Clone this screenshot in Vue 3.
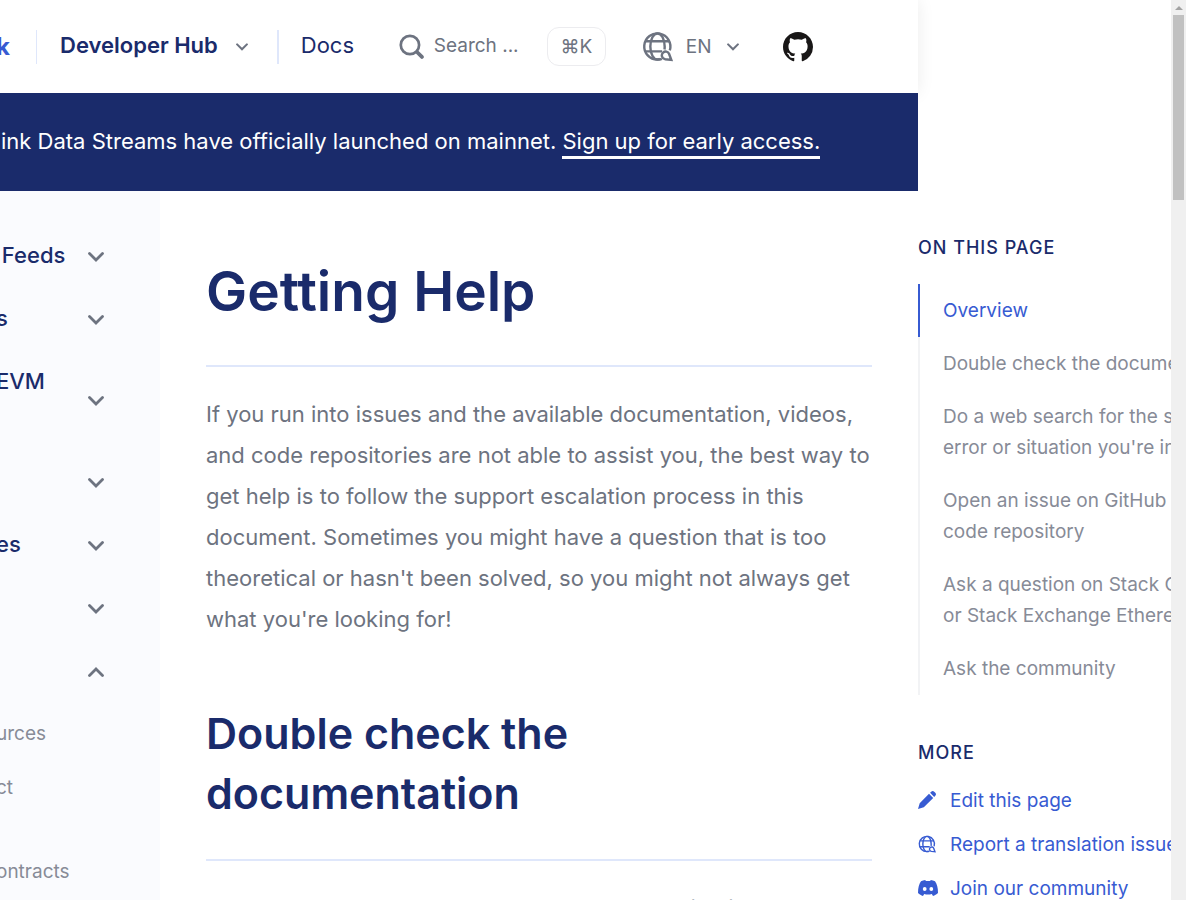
<script setup>
const navItems = [
  { label: '\u00a0Feeds', size: 'single' },
  { label: 's', size: 'single' },
  { label: 'EVM', size: 'double' },
  { label: '', size: 'single' },
  { label: 'es', size: 'single' },
  { label: '', size: 'single' },
  { label: '', size: 'single', open: true },
]
const toc = [
  ['Overview'],
  ['Double check the documentation'],
  ['Do a web search for the specific', "error or situation you're in"],
  ['Open an issue on GitHub', 'code repository'],
  ['Ask a question on Stack Overflow', 'or Stack Exchange Ethereum'],
  ['Ask the community'],
]
</script>

<template>
  <div class="window">
    <svg class="defs" aria-hidden="true">
      <symbol id="globe" viewBox="0 0 32 32">
        <g fill="none" stroke="currentColor" stroke-width="2.5">
          <path d="M28.700 20A13.500 13.500 0 1 0 16 29.500c1.700 0 3-.2 4.500-.8" />
          <path d="M18.500 28.500c-.8.700-1.600 1-2.500 1-4.200 0-7.400-6-7.400-13.500S11.800 2.500 16 2.500 23.400 8.500 23.400 16c0 1.200 0 2.200-.2 3.200" />
          <path d="M3.800 10.500h24.400M3.800 21h17" />
          <path d="M21.800 22.300c2-1.800 5.100-1.200 6.100 1.200l2.300 6.300-6.200-.6c-3.400-.5-4.700-4.600-2.200-6.900z" />
        </g>
      </symbol>
      <symbol id="down" viewBox="0 0 16 10">
        <path d="M1.500 1.500 8 8l6.500-6.500" fill="none" stroke="currentColor" stroke-width="2.800" stroke-linecap="round" />
      </symbol>
    </svg>

    <div class="page">
      <div class="primary">
        <header class="topbar">
          <a class="brand" href="#">k</a>
          <button class="hub" type="button"><span>Developer Hub</span><svg class="caret"><use href="#down" /></svg></button>
          <a class="docs" href="#">Docs</a>
          <button class="search" type="button">
            <svg class="lens" viewBox="0 0 24 24" fill="none" stroke="currentColor">
              <circle cx="10.500" cy="10.500" r="8.800" stroke-width="2.600" />
              <path d="m17.500 17.500 4.500 4.500" stroke-width="3.600" stroke-linecap="round" />
            </svg>
            <span>Search ...</span>
            <kbd>⌘K</kbd>
          </button>
          <label class="lang">
            <svg class="globe" role="img" aria-label="Language"><use href="#globe" /></svg>
            <select><option>EN</option></select>
            <svg class="caret"><use href="#down" /></svg>
          </label>
          <a class="github" href="#" aria-label="GitHub">
            <svg viewBox="0 0 16 16" fill="#191717"><path d="M8 0C3.580 0 0 3.580 0 8c0 3.540 2.290 6.530 5.470 7.590.4.070.55-.17.55-.38 0-.19-.01-.82-.01-1.490-2.010.37-2.530-.49-2.690-.94-.09-.23-.48-.94-.82-1.130-.28-.15-.68-.52-.01-.53.63-.01 1.080.58 1.230.82.72 1.210 1.870.87 2.330.66.07-.52.28-.87.51-1.070-1.780-.2-3.640-.89-3.640-3.950 0-.87.31-1.590.82-2.150-.08-.2-.36-1.020.08-2.120 0 0 .67-.21 2.200.82.64-.18 1.320-.27 2-.27s1.360.09 2 .27c1.530-1.040 2.200-.82 2.200-.82.44 1.100.16 1.920.08 2.120.51.56.82 1.270.82 2.150 0 3.070-1.870 3.750-3.650 3.950.29.25.54.73.54 1.480 0 1.070-.01 1.930-.01 2.200 0 .21.15.46.55.38A8.010 8.010 0 0 0 16 8c0-4.420-3.580-8-8-8z" /></svg>
          </a>
        </header>

        <p class="banner">ink Data Streams have officially launched on mainnet. <a href="#">Sign up for early access.</a></p>

        <div class="body">
          <nav class="sidebar" aria-label="Documentation">
            <button v-for="(item, i) in navItems" :key="i" type="button" class="section" :class="[item.size, { open: item.open }]" :aria-label="item.label || 'Section'" :aria-expanded="!!item.open">
              <span>{{ item.label }}</span>
              <svg class="chevron"><use href="#down" /></svg>
            </button>
            <ul>
              <li><a href="#">urces</a></li>
              <li><a href="#">ct</a></li>
              <li class="wrapped"><a href="#">ontracts</a></li>
            </ul>
          </nav>
          <main>
            <h1>Getting Help</h1>
            <p>If you run into issues and the available documentation, videos,<br>and code repositories are not able to assist you, the best way to<br>get help is to follow the support escalation process in this<br>document. Sometimes you might have a question that is too<br>theoretical or hasn't been solved, so you might not always get<br>what you're looking for!</p>
            <h2>Double check the<br>documentation</h2>
            <p>Check the docs and make sure that your question is not already</p>
          </main>
        </div>
      </div>

      <aside>
        <h3>On this page</h3>
        <ul class="toc">
          <li v-for="(lines, i) in toc" :key="i" :class="{ current: i === 0 }">
            <a href="#"><template v-for="(line, n) in lines" :key="n"><br v-if="n">{{ line }}</template></a>
          </li>
        </ul>
        <h3>More</h3>
        <ul class="more">
          <li><a href="#">
            <svg viewBox="0 0 18 18" fill="currentColor"><path d="M11 2.800 15.200 7 5.800 16.300 0 18l1.700-5.800zM12.100 1.800l1.100-1.100c.9-.9 2.100-.9 3 0l1.100 1.100c.9.900.9 2.100 0 3l-1.100 1.100z" /></svg>
            Edit this page</a></li>
          <li><a href="#"><svg><use href="#globe" /></svg>Report a translation issue</a></li>
          <li><a href="#">
            <svg class="discord" viewBox="0 0 20 16" fill="currentColor"><path fill-rule="evenodd" d="M7.300 0C5.700.2 4.300.6 3 1.200 1 4.200 0 7.500 0 13c1.500 1.500 3.200 2.400 5 3l1.200-2c2.500.7 5.100.7 7.600 0l1.200 2c1.800-.6 3.500-1.500 5-3 0-5.500-1-8.800-3-11.800C15.700.6 14.300.2 12.700 0l-.5 1.100a14 14 0 0 0-4.400 0zM6.700 7a1.900 2 0 1 0 0 4 1.900 2 0 0 0 0-4zm6.600 0a1.900 2 0 1 0 0 4 1.900 2 0 0 0 0-4z" /></svg>
            Join our community</a></li>
        </ul>
      </aside>
    </div>
    <div class="scrollbar" aria-hidden="true"><i class="up"></i><i class="thumb"></i></div>
  </div>
</template>

<style>
body { background: #fff; }
</style>

<style scoped>
.window {
  --navy: #1a2b6b;
  --blue: #375bd2;
  --gray: #6d7380;
  --line: #dfe7fb;
  display: flex;
  height: 100vh;
  overflow: hidden;
  color: var(--gray);
  font-family: Inter, "Liberation Sans", sans-serif;
  font-size: 22px;
}
.defs { position: absolute; width: 0; height: 0; }
a { color: inherit; text-decoration: none; }
button, select { padding: 0; border: 0; background: none; color: inherit; font: inherit; }
ul { margin: 0; padding: 0; list-style: none; }
svg { flex: none; }
.page { display: flex; flex: 1; min-width: 0; overflow: hidden; }
.primary { display: flex; flex: 1; flex-direction: column; min-width: 0; }

.topbar { display: flex; align-items: center; flex: none; height: 93px; box-shadow: 0 0 16px rgba(0, 0, 0, .08); color: var(--navy); }
.brand { width: 40px; margin-left: -4px; color: var(--blue); font-size: 24px; font-weight: 700; }
.hub { display: flex; align-items: center; height: 34px; padding: 0 29px 0 23px; border: solid var(--line); border-width: 0 2px 0 1px; font-weight: 600; }
.hub .caret { margin-left: 18px; }
.hub span, .docs { padding-bottom: 4px; }
.caret { width: 12px; height: 8px; color: var(--gray); }
.docs { width: 98px; margin-left: 22px; }
.search { display: flex; align-items: center; color: var(--gray); font-size: 19px; }
.lens { width: 25px; height: 25px; margin-right: 10px; }
.search span { width: 113px; padding-bottom: 2px; text-align: left; }
kbd { box-sizing: border-box; width: 59px; height: 39px; border: 1px solid #ececef; border-radius: 12px; font: inherit; line-height: 37px; text-align: center; }
.lang { display: flex; align-items: center; margin-left: 36px; color: var(--gray); font-size: 19px; }
.globe { width: 31px; height: 31px; margin-right: 13px; }
select { width: 41px; appearance: none; }
.github { width: 30px; height: 30px; margin-left: 44px; }
.github svg { display: block; }

.banner { flex: none; margin: 0; padding: 0 0 2px 1px; background: #1a2b6b; color: #fff; line-height: 96px; white-space: nowrap; }
.banner a { padding-bottom: 2px; border-bottom: 3px solid #fff; }

.body { display: flex; flex: 1; min-height: 0; }
.sidebar { display: flex; flex: none; flex-direction: column; box-sizing: border-box; width: 164px; margin-left: -4px; padding: 34px 56px 0 0; background: #fafbfe; }
.section { display: flex; align-items: center; justify-content: space-between; flex: none; height: 63px; color: var(--navy); font-weight: 500; }
.section span { padding-bottom: 4px; }
.section.double { height: 100px; }
.section.double span { padding-bottom: 41px; }
.chevron { width: 16px; height: 10px; color: var(--gray); }
.open .chevron { transform: rotate(180deg); }
.sidebar ul { margin-top: 16px; color: #878b97; font-size: 19px; line-height: 30px; }
.sidebar li { height: 54px; }
.sidebar .wrapped { padding-top: 30px; }

main { flex: 1; min-width: 0; padding: 56px 46px 0; }
h1, h2 { margin: 0; border-bottom: 2px solid var(--line); color: var(--navy); font-weight: 600; }
h1 { padding-bottom: 30px; font-size: 55px; line-height: 88px; }
h2 { padding: 63px 0 36px; font-size: 43px; line-height: 60px; }
main p { margin: 27px 0 0; line-height: 41px; white-space: nowrap; }

aside { flex: none; width: 253px; padding-top: 236px; color: #878b97; font-size: 19px; white-space: nowrap; }
h3 { margin: 0; color: var(--navy); font-size: 18px; font-weight: 500; letter-spacing: 1px; line-height: 24px; text-transform: uppercase; }
.toc { margin: 24px 0 46px; }
.toc li { padding: 11px 0 11px 23px; border-left: 2px solid #f2f3f5; line-height: 31px; }
.toc .current { border-color: var(--blue); color: var(--blue); }
.more { margin-top: 13px; color: var(--blue); }
.more a { display: flex; align-items: center; height: 44px; }
.more svg { width: 18px; height: 18px; margin-right: 14px; }
.more .discord { width: 20px; height: 16px; margin-right: 12px; }

.scrollbar { flex: none; width: 15px; background: #f0f0f0; }
.up { display: block; width: 0; margin: 6px auto 5px; border: 4px solid transparent; border-top: 0; border-bottom-color: #a3a3a3; }
.thumb { display: block; height: 185px; margin: 0 2px; background: #c1c1c1; }
</style>
